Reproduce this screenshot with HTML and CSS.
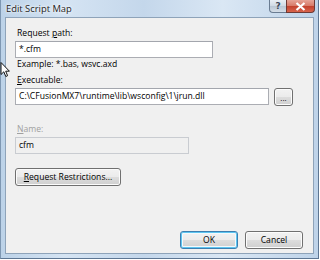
FILE: index.html
```html
<!DOCTYPE html>
<html lang="en">

<head>
  <meta charset="UTF-8" />
  <title>Edit Script Map</title>
  <link rel="stylesheet" href="styles.css">
</head>

<body>
  <div class="janela">

    <div class="barra-titulo">
      <span class="titulo">Edit Script Map</span>
      <div class="botoes-titulo">
        <button class="btn-ajuda">?</button>
        <button class="btn-fechar">
          <svg width="11" height="9" viewBox="0 0 11 9">
            <path d="M1.5 1 L9.5 8 M9.5 1 L1.5 8" stroke="#fff" stroke-width="2.2" />
          </svg>
        </button>
      </div>
    </div>

    <div class="cliente">
      <label class="rotulo">Request <u>p</u>ath:</label>
      <div class="campo campo-caminho">*.cfm</div>
      <div class="exemplo">Example: *.bas, wsvc.axd</div>

      <label class="rotulo rotulo-exe"><u>E</u>xecutable:</label>
      <div class="linha-exe">
        <div class="campo campo-exe">C:\CFusionMX7\runtime\lib\wsconfig\1\jrun.dll</div>
        <button class="botao botao-reticencias">...</button>
      </div>

      <label class="rotulo rotulo-nome desativado"><u>N</u>ame:</label>
      <div class="campo campo-nome desativado-campo">cfm</div>

      <button class="botao botao-restricoes"><u>R</u>equest Restrictions...</button>

      <div class="rodape">
        <button class="botao botao-ok">OK</button>
        <button class="botao">Cancel</button>
      </div>
    </div>

  </div>

  <!-- cursor do mouse -->
  <svg class="cursor" width="10" height="16" viewBox="0 0 10 16">
    <path d="M1 0.5 L1 12.5 L3.8 9.8 L5.8 14.5 L7.6 13.7 L5.7 9.2 L9.4 9.2 Z" fill="#fff" stroke="#111" stroke-width="1" stroke-linejoin="round" />
  </svg>
</body>

</html>
```

FILE: styles.css
```css
body {
  margin: 0;
  padding: 0;
  width: 320px;
  height: 260px;
  overflow: hidden;
  background: #fff;
  font-family: "Open Sans", "Noto Sans", sans-serif;
  font-size: 8.6px;
  color: #000;
  position: relative;
}

.janela {
  width: 319px;
  height: 259px;
  box-sizing: border-box;
  border-right: 1px solid #5d7693;
  border-bottom: 1px solid #5d7693;
  border-left: 1px solid #7e97b2;
  background: linear-gradient(to right, #bcd2e8, #d5e4f3 20%, #c4d7eb 45%, #dae7f4 70%, #bed3e9);
  display: flex;
  flex-direction: column;
}

.barra-titulo {
  height: 17px;
  display: flex;
  justify-content: space-between;
  align-items: flex-start;
  flex-shrink: 0;
}

.titulo {
  padding-left: 5px;
  line-height: 18px;
  font-size: 9.4px;
  color: #1b1b1b;
  text-shadow: 0 0 4px #fff, 0 0 2px #fff;
}

.botoes-titulo {
  display: flex;
  margin-right: 3px;
}

.botoes-titulo button {
  height: 13px;
  border: 1px solid #6a7c92;
  border-top: none;
  padding: 0;
  display: flex;
  align-items: center;
  justify-content: center;
}

.btn-ajuda {
  width: 17px;
  border-radius: 0 0 0 4px;
  background: linear-gradient(#e8eef5, #cfd9e4 50%, #b9c6d4 51%, #d5dee8);
  color: #3d4a5a;
  font-family: "DejaVu Sans", sans-serif;
  font-size: 9px;
  font-weight: bold;
  border-right: none !important;
}

.btn-fechar {
  width: 29px;
  border-radius: 0 0 4px 0;
  background: linear-gradient(#e6a497, #d77967 50%, #c2402c 51%, #d8644c);
  border-color: #6d3a36 !important;
}

.cliente {
  flex: 1;
  margin: 0 4px 4px 4px;
  border: 1px solid #8ea3b9;
  background: #f0f0f0;
  padding: 8px 10px 4px 9px;
  display: flex;
  flex-direction: column;
  align-items: flex-start;
}

.rotulo {
  line-height: 14px;
  margin-bottom: 1px;
  padding-left: 2px;
}

.rotulo u,
.botao u {
  text-decoration-thickness: 1px;
  text-underline-offset: 1px;
}

.campo {
  height: 17px;
  box-sizing: border-box;
  border: 1px solid #abadb3;
  border-top-color: #a3a6ad;
  background: #fff;
  padding-left: 3px;
  line-height: 15px;
  white-space: nowrap;
}

.campo-caminho {
  width: 198px;
}

.exemplo {
  line-height: 13px;
  padding-left: 2px;
}

.rotulo-exe {
  margin-top: 2px;
}

.linha-exe {
  display: flex;
  gap: 5px;
  align-items: flex-start;
}

.campo-exe {
  width: 254px;
}

.botao {
  height: 18px;
  box-sizing: border-box;
  border: 1px solid #707070;
  border-radius: 3px;
  background: linear-gradient(#f2f2f2, #ebebeb 50%, #dddddd 51%, #cfcfcf);
  box-shadow: inset 0 0 0 1px #fcfcfc;
  font-family: inherit;
  font-size: 8.6px;
  color: #000;
  padding: 0;
  line-height: 15px;
  white-space: nowrap;
}

.botao-reticencias {
  width: 19px;
  font-size: 8px;
}

.desativado {
  color: #a0a0a0;
}

.rotulo-nome {
  margin-top: 16px;
}

.campo-nome {
  width: 174px;
}

.desativado-campo {
  background: #f0f0f0;
  border-color: #c9ccd1;
}

.botao-restricoes {
  width: 106px;
  margin-top: 14px;
}

.rodape {
  margin-top: auto;
  align-self: flex-end;
  display: flex;
  gap: 7px;
}

.rodape .botao {
  width: 58px;
}

.botao-ok {
  border-color: #3c7fb1 !important;
  box-shadow: inset 0 0 0 1px #5ec6f1, inset 0 0 0 2px #f4f9fc !important;
}

.cursor {
  position: absolute;
  left: 0;
  top: 62px;
}
```
